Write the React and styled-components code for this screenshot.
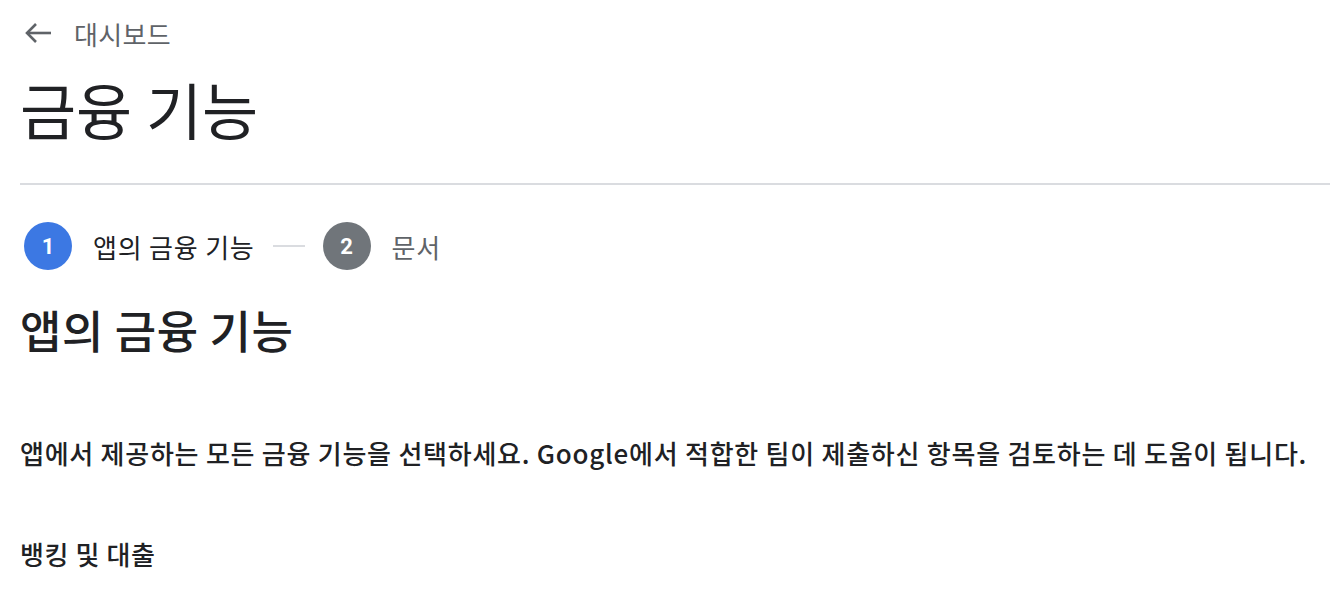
import React from "react";
import styled, { createGlobalStyle } from "styled-components";

const GlobalStyle = createGlobalStyle`
  body {
    margin: 0;
    background: #ffffff;
    font-family: "Noto Sans CJK KR", "Noto Sans", sans-serif;
    color: #202124;
  }
`;

const St = {
  Page: styled.main`
    display: flex;
    flex-direction: column;
    padding-left: 20px;
    padding-top: 16px;
  `,
  BackLink: styled.a`
    display: flex;
    align-items: center;
    gap: 22px;
    height: 34px;
    padding-left: 4px;
    color: #5f6368;
    font-size: 26px;
    letter-spacing: 0.3px;
    text-decoration: none;
  `,
  Title: styled.h1`
    margin: 0;
    margin-top: 21px;
    font-size: 61px;
    font-weight: 400;
    line-height: 76px;
    color: #202124;
  `,
  Divider: styled.hr`
    margin: 0;
    margin-top: 36px;
    border: none;
    border-top: 2px solid #dadce0;
  `,
  Stepper: styled.ol`
    display: flex;
    align-items: center;
    list-style: none;
    margin: 0;
    padding: 0;
    margin-top: 37px;
    padding-left: 4px;
  `,
  Step: styled.li`
    display: flex;
    align-items: center;
    gap: 21px;
    font-size: 26px;
    letter-spacing: 0.8px;
    color: ${({ active }) => (active ? "#202124" : "#5f6368")};
  `,
  StepNum: styled.span`
    display: flex;
    align-items: center;
    justify-content: center;
    width: 48px;
    height: 48px;
    border-radius: 50%;
    background: ${({ active }) => (active ? "#3c78e3" : "#70757a")};
    color: #ffffff;
    font-family: Roboto, "Noto Sans", sans-serif;
    font-weight: 700;
    font-size: 22px;
    letter-spacing: 0;
  `,
  Connector: styled.span`
    width: 32px;
    height: 2px;
    margin: 0 18px;
    background: #dadce0;
  `,
  SectionTitle: styled.h2`
    margin: 0;
    margin-top: 30px;
    font-size: 45px;
    font-weight: 500;
    letter-spacing: 0.6px;
    line-height: 60px;
  `,
  Lead: styled.p`
    margin: 0;
    margin-top: 75px;
    font-size: 26px;
    font-weight: 500;
    letter-spacing: 0.75px;
    line-height: 36px;
  `,
  SubTitle: styled.h3`
    margin: 0;
    margin-top: 65px;
    font-size: 26px;
    font-weight: 500;
    letter-spacing: 0.6px;
    line-height: 36px;
  `,
};

const BackArrow = () => (
  <svg width="28" height="24" viewBox="0 0 28 24" fill="none" stroke="#5f6368" strokeWidth="2.6">
    <path d="M27 12H3" />
    <path d="M12 3L3 12l9 9" />
  </svg>
);

const steps = [
  { num: 1, label: "앱의 금융 기능", active: true },
  { num: 2, label: "문서", active: false },
];

export default function App() {
  return (
    <>
      <GlobalStyle />
      <St.Page>
        <St.BackLink href="#">
          <BackArrow />
          대시보드
        </St.BackLink>
        <St.Title>금융 기능</St.Title>
        <St.Divider />
        <St.Stepper>
          {steps.map((step, i) => (
            <React.Fragment key={step.num}>
              {i > 0 && <St.Connector />}
              <St.Step active={step.active}>
                <St.StepNum active={step.active}>{step.num}</St.StepNum>
                {step.label}
              </St.Step>
            </React.Fragment>
          ))}
        </St.Stepper>
        <St.SectionTitle>앱의 금융 기능</St.SectionTitle>
        <St.Lead>
          앱에서 제공하는 모든 금융 기능을 선택하세요. Google에서 적합한 팀이
          제출하신 항목을 검토하는 데 도움이 됩니다.
        </St.Lead>
        <St.SubTitle>뱅킹 및 대출</St.SubTitle>
      </St.Page>
    </>
  );
}
